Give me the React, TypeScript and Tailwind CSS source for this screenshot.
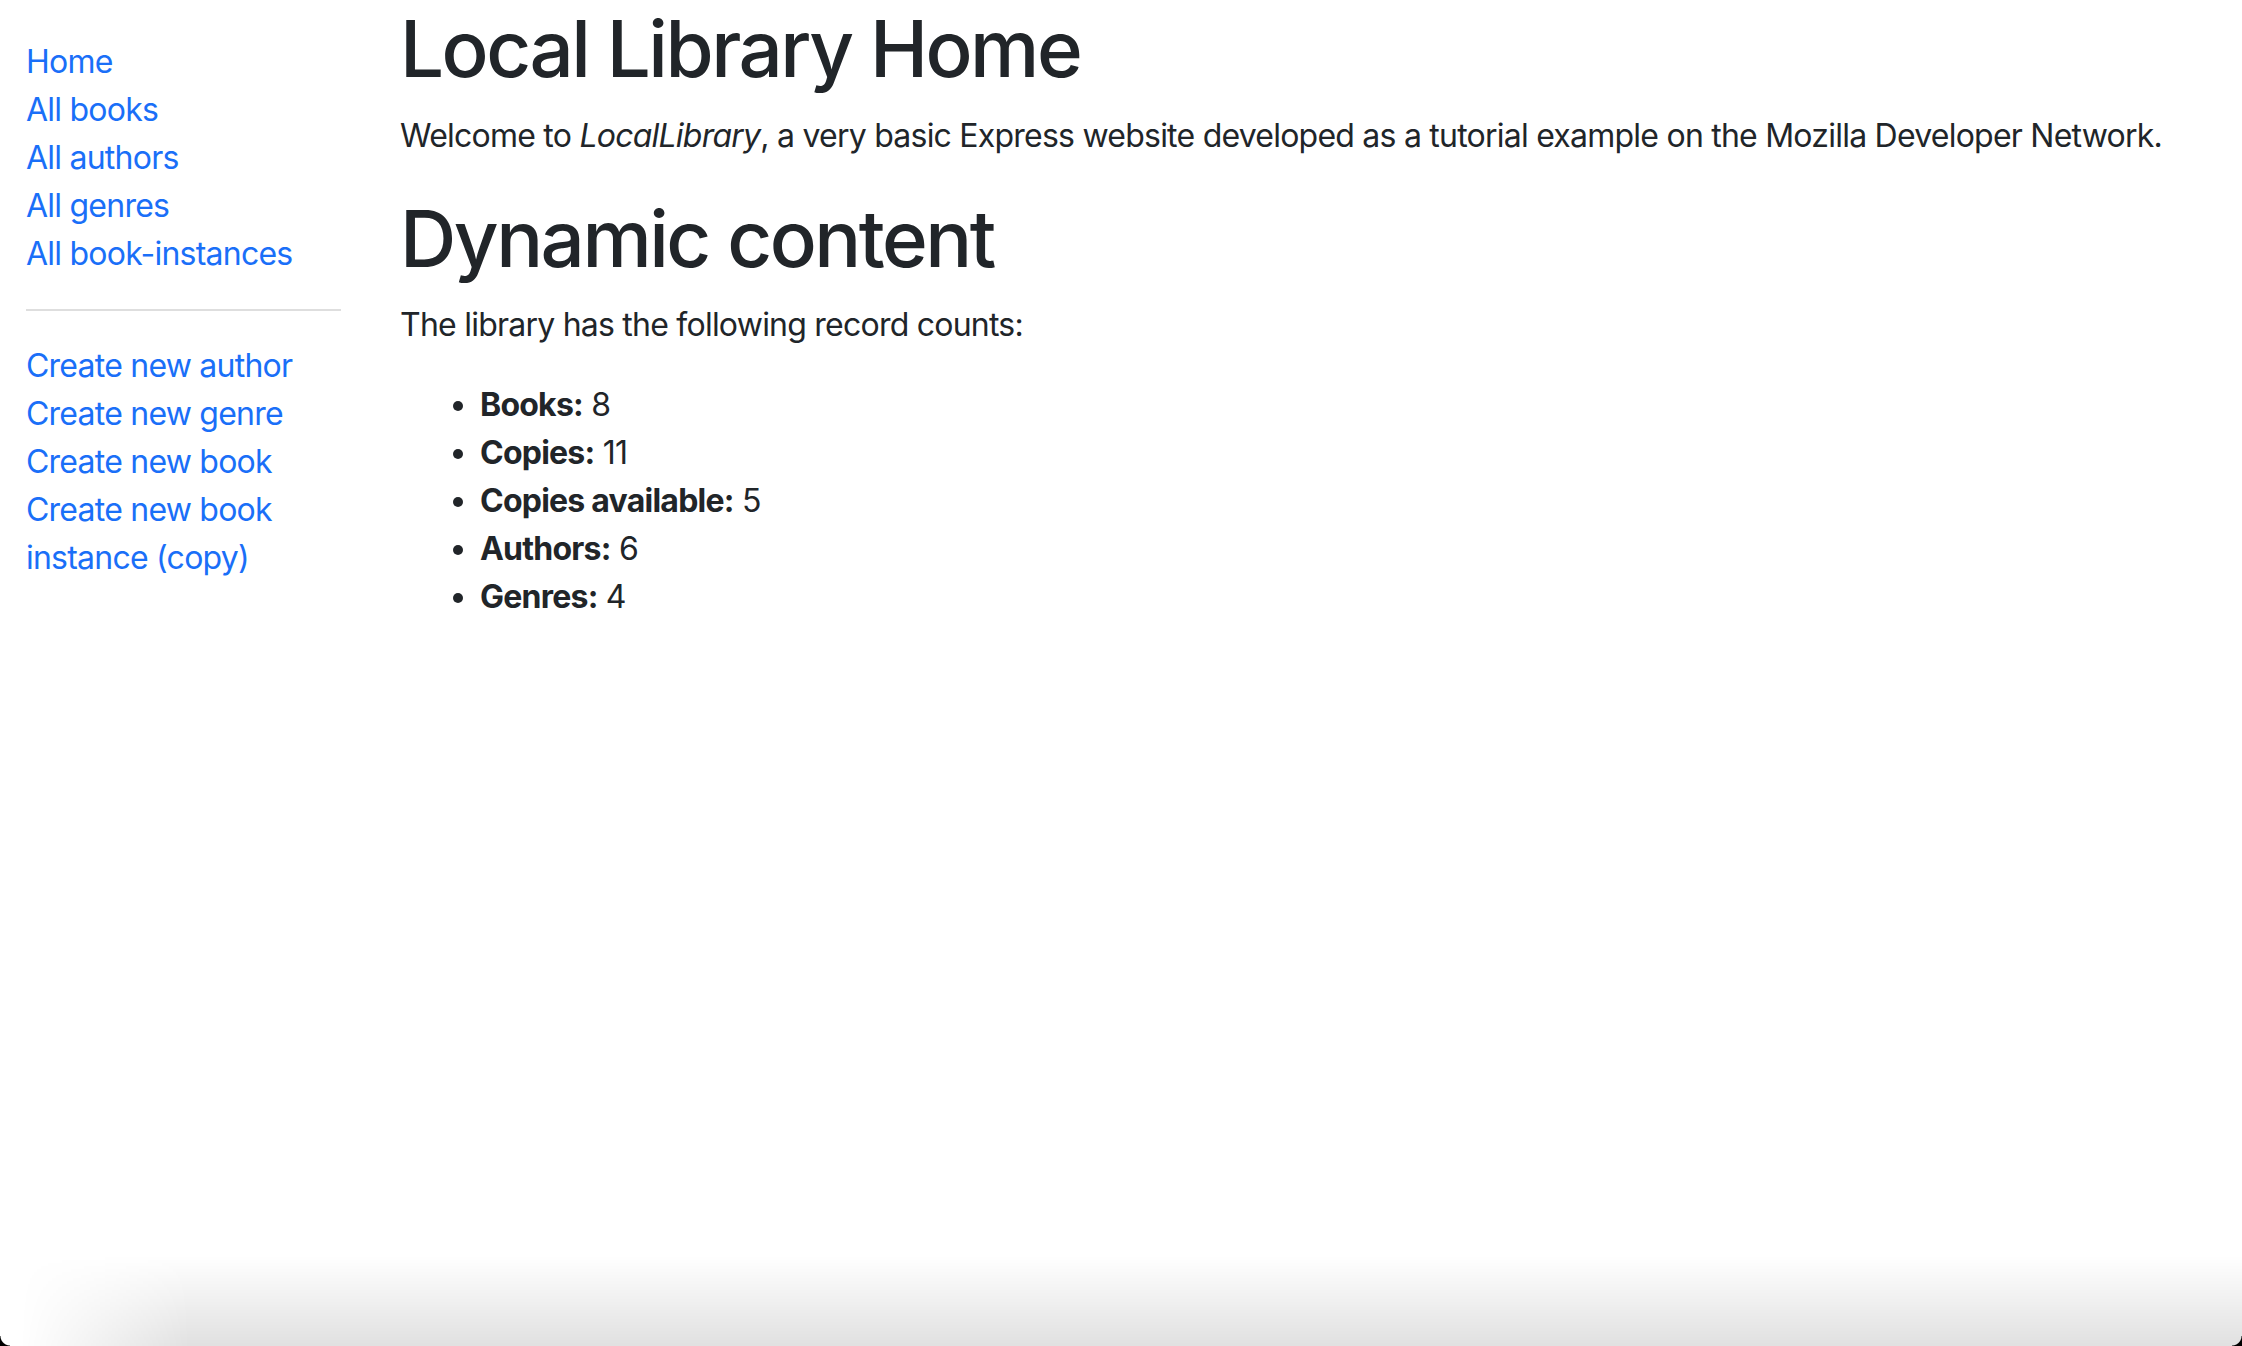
import React from 'react';

const browseLinks = ['Home', 'All books', 'All authors', 'All genres', 'All book-instances'];
const createLinks = ['Create new author', 'Create new genre', 'Create new book', 'Create new book instance (copy)'];

const counts: [string, number][] = [
  ['Books', 8],
  ['Copies', 11],
  ['Copies available', 5],
  ['Authors', 6],
  ['Genres', 4],
];

const App: React.FC = () => {
  return (
    <div className="relative min-h-screen overflow-hidden bg-white font-['Inter','Liberation_Sans',sans-serif] text-[32px] leading-[48px] tracking-[-0.024em] text-[#212529]">
      <div className="flex">
        {/* sidebar */}
        <div className="ml-[26px] w-[315px] shrink-0">
          <ul className="mt-[38px] list-none p-0">
            {browseLinks.map((l) => (
              <li key={l}>
                <a href="#" className="text-[#1a6ff8]">{l}</a>
              </li>
            ))}
            <li>
              <hr className="my-[31px] border-0 border-t-2 border-[#dedede]" />
            </li>
            {createLinks.map((l) => (
              <li key={l}>
                <a href="#" className="text-[#1a6ff8]">{l}</a>
              </li>
            ))}
          </ul>
        </div>

        {/* content */}
        <main className="pl-[59px] pt-[2px]">
          <h1 className="mb-[16px] text-[78px] font-medium leading-[1.2] tracking-[-0.032em]">Local Library Home</h1>
          <p className="mb-[32px]">
            Welcome to <em>LocalLibrary</em>, a very basic Express website developed as a tutorial example on the Mozilla Developer Network.
          </p>
          <h1 className="mb-[16px] text-[78px] font-medium leading-[1.2] tracking-[-0.032em]">Dynamic content</h1>
          <p className="mb-[32px]">The library has the following record counts:</p>
          <ul className="list-disc pl-[80px]">
            {counts.map(([k, v]) => (
              <li key={k}>
                <strong className="font-bold">{k}:</strong> {v}
              </li>
            ))}
          </ul>
        </main>
      </div>

      {/* window shadow at the bottom edge */}
      <div className="pointer-events-none absolute bottom-0 left-0 right-0 h-[90px] bg-gradient-to-b from-transparent to-black/[0.12] [mask-image:linear-gradient(to_right,transparent_20px,black_190px)]" />
      <div className="pointer-events-none absolute bottom-0 left-0 h-[10px] w-[10px] bg-[radial-gradient(circle_at_top_right,transparent_9px,black_10px)]" />
      <div className="pointer-events-none absolute bottom-0 right-0 h-[10px] w-[10px] bg-[radial-gradient(circle_at_top_left,transparent_9px,black_10px)]" />
    </div>
  );
};

export default App;
